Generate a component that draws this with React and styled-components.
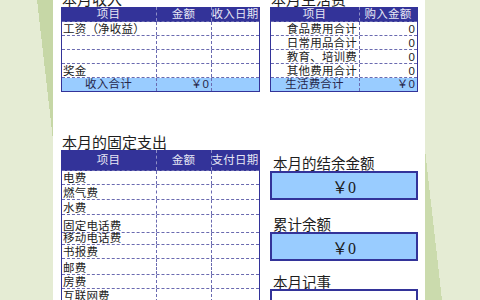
import React from 'react';
import styled, { createGlobalStyle } from 'styled-components';

const GlobalStyle = createGlobalStyle`
  html, body {
    margin: 0;
    padding: 0;
    overflow: hidden;
  }
  body {
    font-family: "Liberation Sans", "Noto Sans CJK SC", sans-serif;
  }
`;

const NAVY = '#333399';
const SKY = '#99ccff';
const DASH = '#6a6ab0';

const Stage = styled.div`
  width: 480px;
  height: 300px;
  overflow: hidden;
  background-color: #e5ecd4;
  background-image:
    linear-gradient(to bottom left, #c6d7a6 50%, transparent 50%),
    linear-gradient(to top right, #cbdbad 50%, transparent 50%);
  background-repeat: no-repeat;
  background-position: 37px 0, 425px 150px;
  background-size: 16px 140px, 17px 150px;
`;

const Sheet = styled.div`
  margin-left: 53px;
  width: 372px;
  height: 300px;
  box-sizing: border-box;
  padding: 0 7px 0 8px;
  background: #ffffff;
  overflow: hidden;
`;

const TopRow = styled.div`
  display: flex;
  gap: 10px;
  margin-top: -9px;
`;

const BottomRow = styled.div`
  display: flex;
  align-items: flex-start;
  gap: 10px;
  margin-top: 42px;
`;

const Section = styled.div`
  display: flex;
  flex-direction: column;
  width: ${p => p.$w}px;
`;

const Title = styled.div`
  font-family: "Noto Sans CJK SC", sans-serif;
  font-size: 15px;
  line-height: 16px;
  height: 16px;
  color: #1e1e1e;
  padding-left: 1px;
  white-space: nowrap;
`;

const Frame = styled.div`
  display: flex;
  flex-direction: column;
  border: 1px solid ${NAVY};
  border-top: none;
  box-sizing: border-box;
`;

const Row = styled.div`
  display: grid;
  grid-template-columns: ${p => p.$cols};
  height: ${p => p.$h}px;
  box-sizing: border-box;
  background: ${p => (p.$kind === 'head' ? NAVY : p.$kind === 'total' ? SKY : '#fff')};
  border-bottom: 1px dashed ${DASH};
  &:last-child {
    border-bottom: none;
  }
`;

const Cell = styled.div`
  display: flex;
  align-items: ${p => (p.$kind === 'head' || p.$kind === 'total' ? 'center' : 'flex-end')};
  justify-content: ${p => (p.$align === 'right' ? 'flex-end' : p.$align === 'center' ? 'center' : 'flex-start')};
  padding: 0 2px 0 1px;
  box-sizing: border-box;
  white-space: nowrap;
  font-size: 11.5px;
  line-height: 11px;
  letter-spacing: 0.2px;
  color: ${p => (p.$kind === 'head' ? '#e6e6f5' : p.$kind === 'total' ? '#26264a' : '#222222')};
  border-right: 1px dashed ${p => (p.$kind === 'head' ? 'rgba(255,255,255,0.45)' : DASH)};
  &:last-child {
    border-right: none;
  }
`;

const SideColumn = styled.div`
  display: flex;
  flex-direction: column;
  width: 148px;
  padding-top: 21px;
`;

const Label = styled.div`
  font-family: "Noto Sans CJK SC", sans-serif;
  font-size: 14.5px;
  line-height: ${p => p.$lh || 16}px;
  height: ${p => p.$lh || 16}px;
  margin-top: ${p => p.$mt || 0}px;
  padding-left: 3px;
  color: #1e1e1e;
  white-space: nowrap;
`;

const ValueBox = styled.div`
  height: ${p => p.$h || 29}px;
  box-sizing: border-box;
  border: 2px solid ${NAVY};
  background: ${p => (p.$blank ? '#ffffff' : SKY)};
  display: flex;
  align-items: center;
  justify-content: center;
  font-family: "Liberation Serif", "Noto Sans CJK SC", serif;
  font-size: 16px;
  color: #1a1a1a;
`;

const DataTable = ({ cols, rows }) => (
  <Frame>
    {rows.map((r, i) => (
      <Row key={i} $cols={cols} $h={r.h} $kind={r.kind}>
        {r.cells.map((c, j) => (
          <Cell key={j} $kind={r.kind} $align={r.align ? r.align[j] : 'left'}>
            {c}
          </Cell>
        ))}
      </Row>
    ))}
  </Frame>
);

const incomeRows = [
  { kind: 'head', h: 15, cells: ['项目', '金额', '收入日期'], align: ['center', 'center', 'center'] },
  { h: 14, cells: ['工资（净收益）', '', ''] },
  { h: 14, cells: ['', '', ''] },
  { h: 14, cells: ['', '', ''] },
  { h: 14, cells: ['奖金', '', ''] },
  { kind: 'total', h: 13, cells: ['收入合计', '￥0', ''], align: ['center', 'right', 'left'] },
];

const livingRows = [
  { kind: 'head', h: 15, cells: ['项目', '购入金额'], align: ['center', 'center'] },
  { h: 14, cells: ['食品费用合计', '0'], align: ['right', 'right'] },
  { h: 14, cells: ['日常用品合计', '0'], align: ['right', 'right'] },
  { h: 14, cells: ['教育、培训费', '0'], align: ['right', 'right'] },
  { h: 14, cells: ['其他费用合计', '0'], align: ['right', 'right'] },
  { kind: 'total', h: 13, cells: ['生活费合计', '￥0'], align: ['center', 'right'] },
];

const fixedItems = [
  ['电费', 14],
  ['燃气费', 15],
  ['水费', 15],
  ['固定电话费', 18],
  ['移动电话费', 12],
  ['书报费', 14],
  ['邮费', 16],
  ['房费', 14],
  ['互联网费', 14],
  ['', 14],
];

const fixedRows = [
  { kind: 'head', h: 21, cells: ['项目', '金额', '支付日期'], align: ['center', 'center', 'center'] },
  ...fixedItems.map(([name, h]) => ({ h, cells: [name, '', ''] })),
];

export default function App() {
  return (
    <>
      <GlobalStyle />
      <Stage>
        <Sheet>
          <TopRow>
            <Section $w={199}>
              <Title>本月收入</Title>
              <DataTable cols="95px 55px 47px" rows={incomeRows} />
            </Section>
            <Section $w={148}>
              <Title>本月生活费</Title>
              <DataTable cols="89px 57px" rows={livingRows} />
            </Section>
          </TopRow>
          <BottomRow>
            <Section $w={199}>
              <Title>本月的固定支出</Title>
              <DataTable cols="95px 55px 47px" rows={fixedRows} />
            </Section>
            <SideColumn>
              <Label>本月的结余金额</Label>
              <ValueBox>￥0</ValueBox>
              <Label $mt={16}>累计余额</Label>
              <ValueBox>￥0</ValueBox>
              <Label $mt={13} $lh={15}>本月记事</Label>
              <ValueBox $blank $h={40} />
            </SideColumn>
          </BottomRow>
        </Sheet>
      </Stage>
    </>
  );
}
